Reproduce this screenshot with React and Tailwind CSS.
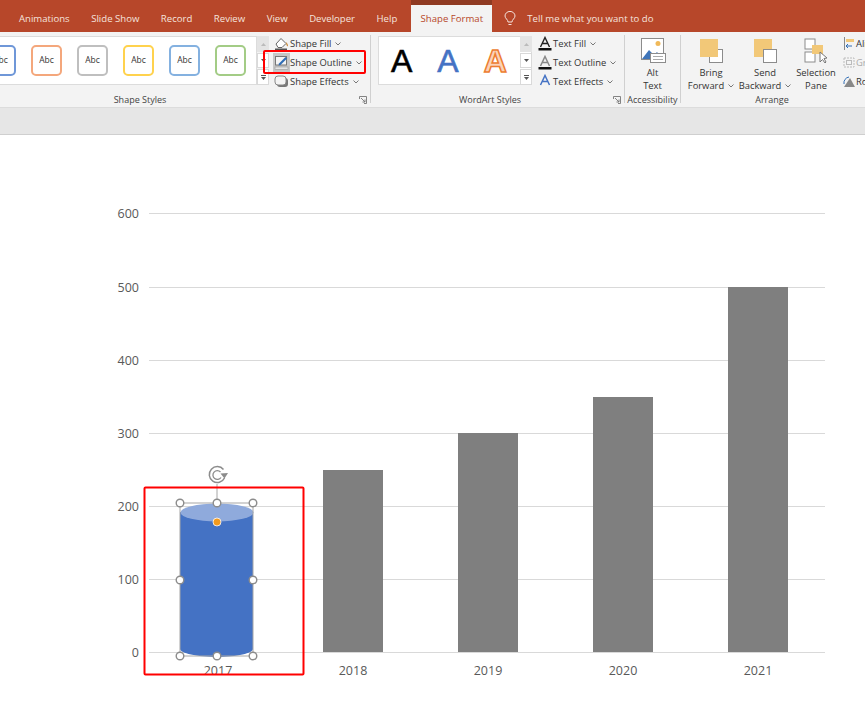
import React from "react";

const tabs = ["Animations", "Slide Show", "Record", "Review", "View", "Developer", "Help"];
const swatches = ["border-[#6f97d8]", "border-[#f4a77c]", "border-[#bfbfbf]", "border-[#ffd24d]", "border-[#84b1e0]", "border-[#a3cc86]"];

const Chevron = () => (
	<svg width="6" height="4" viewBox="0 0 6 4" className="ml-1 inline-block shrink-0">
		<path d="M0.5 0.5 L3 3 L5.5 0.5" fill="none" stroke="#6a6a6a" strokeWidth="0.9" />
	</svg>
);

const Launcher = () => (
	<svg width="8" height="8" viewBox="0 0 8 8" className="shrink-0">
		<path d="M0.5 3V0.5H7.5V7.5H5M2 2L6 6M6 3.5V6H3.5" fill="none" stroke="#777" strokeWidth="0.9" />
	</svg>
);

const Divider = () => <div className="mt-[3px] mb-[4px] w-px shrink-0 bg-[#d0d0d0]" />;

const ScrollBar = () => (
	<div className="flex w-[12px] flex-col gap-[1px] text-[#555]">
		<div className="flex h-[16px] items-center justify-center bg-[#e4e4e4]">
			<svg width="5" height="3" viewBox="0 0 5 3"><path d="M2.5 0L5 3H0Z" fill="#bbb" /></svg>
		</div>
		<div className="flex h-[15px] items-center justify-center border border-[#d9d9d9] bg-white">
			<svg width="5" height="3" viewBox="0 0 5 3"><path d="M2.5 3L5 0H0Z" fill="#555" /></svg>
		</div>
		<div className="flex h-[16px] flex-col items-center justify-center gap-[1px] border border-[#d9d9d9] bg-white">
			<div className="h-px w-[5px] bg-[#555]" />
			<svg width="5" height="3" viewBox="0 0 5 3"><path d="M2.5 3L5 0H0Z" fill="#555" /></svg>
		</div>
	</div>
);

const FillIcon = () => (
	<svg width="15" height="15" viewBox="0 0 15 15">
		<path d="M2 8L7 2.5L12 7.5L8 11.5H4Z" fill="#fff" stroke="#666" strokeWidth="1" />
		<path d="M12 6C14 8 14.5 10 13.5 10.5C12.5 10 12 8 12 6Z" fill="#c8893a" />
		<rect x="1" y="12.5" width="12" height="2.5" fill="#555" />
	</svg>
);

const OutlineIcon = () => (
	<svg width="15" height="15" viewBox="0 0 15 15">
		<rect x="1.5" y="1.5" width="11" height="8.5" fill="#f4f4f4" stroke="#777" strokeWidth="1" />
		<path d="M5 8.5L11.5 2L13 3.5L6.5 10L4.5 10.5Z" fill="#2f6db5" />
		<rect x="1" y="12" width="13" height="2.5" fill="#e4e4e4" stroke="#999" strokeWidth="0.6" />
	</svg>
);

const EffectsIcon = () => (
	<svg width="15" height="15" viewBox="0 0 15 15">
		<rect x="3" y="4" width="11" height="9" rx="3" fill="#777" />
		<rect x="1" y="2" width="11" height="9" rx="3" fill="#f4f4f4" stroke="#888" strokeWidth="1" />
	</svg>
);

const LetterIcon = ({ stroke, fill, bar }) => (
	<svg width="14" height="15" viewBox="0 0 14 15">
		<path d="M2.5 11L7 1.5L11.5 11M4.3 7.5H9.7" fill="none" stroke={stroke} strokeWidth={fill ? 1.4 : 1.5} />
		{bar && <rect x="0.5" y="12" width="13" height="2.5" fill="#111" />}
	</svg>
);

const CommandRow = ({ icon, label, active }) => (
	<div className="flex h-[19px] items-center whitespace-nowrap">
		<div className={`flex h-[19px] w-[17px] items-center justify-center ${active ? "bg-[#c6c6c6]" : ""}`}>{icon}</div>
		<span className="text-[9.4px] leading-none text-[#333]">{label}</span>
		<Chevron />
	</div>
);

const BigButton = ({ icon, top, bottom, chevron, width }) => (
	<div className={`flex flex-col items-center ${width}`}>
		<div className="flex h-[25px] shrink-0 items-center justify-center">{icon}</div>
		<span className="mt-[3px] text-[9.4px] leading-[13px] text-[#333]">{top}</span>
		<span className="flex items-center whitespace-nowrap text-[9.4px] leading-[13px] text-[#333]">
			{bottom}
			{chevron && <Chevron />}
		</span>
	</div>
);

const GroupLabel = ({ children, launcher }) => (
	<div className="relative flex h-[15px] items-center justify-center whitespace-nowrap text-[9px] leading-none text-[#444]">
		{children}
		{launcher && (
			<span className="absolute right-[3px] top-[4px]">
				<Launcher />
			</span>
		)}
	</div>
);

const Chart = () => {
	const rows = [
		[213, "600"],
		[287, "500"],
		[360, "400"],
		[433, "300"],
		[506, "200"],
		[579, "100"],
		[652, "0"],
	];
	const bars = [
		[323, 470, "2018", 353],
		[458, 433, "2019", 488],
		[593, 397, "2020", 623],
		[728, 287, "2021", 758],
	];
	const handles = [
		[180, 503],
		[217, 503],
		[253, 503],
		[180, 580],
		[253, 580],
		[180, 656],
		[217, 656],
		[253, 656],
	];
	return (
		<svg viewBox="0 135 865 576" className="block h-[576px] w-[865px] font-['Open_Sans',sans-serif]">
			{rows.map(([y, label]) => (
				<g key={label}>
					<line x1="149" x2="825" y1={y + 0.5} y2={y + 0.5} stroke="#d9d9d9" strokeWidth="1" />
					<text x="139" y={y + 4.5} textAnchor="end" fontSize="12.5" fill="#595959">
						{label}
					</text>
				</g>
			))}
			{bars.map(([x, y, label, cx]) => (
				<g key={label}>
					<rect x={x} y={y} width="60" height={652 - y} fill="#7f7f7f" />
					<text x={cx} y="675" textAnchor="middle" fontSize="12.5" fill="#595959">
						{label}
					</text>
				</g>
			))}
			<text x="218" y="675" textAnchor="middle" fontSize="12.5" fill="#595959">
				2017
			</text>

			<path d="M180 512V649C180 653 197 657 217 657C237 657 253 653 253 649V512Z" fill="#4472c4" />
			<ellipse cx="217" cy="512.5" rx="36.5" ry="9" fill="#8faadc" />
			<rect x="180" y="503" width="73" height="153" fill="none" stroke="#a6a6a6" strokeWidth="1" />
			<line x1="217" x2="217" y1="484" y2="503" stroke="#a6a6a6" strokeWidth="1" />
			<path d="M223.5 469.5A8 8 0 1 0 224.5 478" fill="none" stroke="#8c8c8c" strokeWidth="1.5" />
			<path d="M220.5 472A4.4 4.4 0 1 0 221 477.5" fill="none" stroke="#8c8c8c" strokeWidth="1.3" />
			<path d="M220.5 473.5L228 473L224.5 478.5Z" fill="#8c8c8c" />
			{handles.map(([x, y]) => (
				<circle key={`${x}-${y}`} cx={x} cy={y} r="3.8" fill="#fff" stroke="#8c8c8c" strokeWidth="1.4" />
			))}
			<circle cx="217" cy="522" r="4" fill="#f29a1f" stroke="#fff" strokeWidth="0.8" />

			<rect x="144.5" y="487.5" width="159" height="187" rx="1" fill="none" stroke="#ff0000" strokeWidth="2" />
		</svg>
	);
};

export default function App() {
	return (
		<div className="h-[711px] w-[865px] overflow-hidden bg-white font-['Open_Sans',sans-serif]">
			{/* title tabs */}
			<div className="flex h-[32px] bg-[#b7472a] text-[9.6px] leading-none text-[#f5e3dd]">
				<div className="flex items-center gap-[21.5px] pl-[19px] pt-[6px]">
					{tabs.map((tab) => (
						<span key={tab} className="whitespace-nowrap">
							{tab}
						</span>
					))}
				</div>
				<div className="ml-[14px] flex w-[81px] flex-col bg-[#f3f3f3]">
					<div className="h-[5px] bg-[#8f3a22]" />
					<div className="flex flex-1 items-center justify-center text-[#b7472a]">Shape Format</div>
				</div>
				<div className="ml-[12px] flex items-center gap-[11px] pt-[5px]">
					<svg width="12" height="16" viewBox="0 0 12 16">
						<path d="M4 11C4 8.5 1 7.5 1 5A5 4.6 0 0 1 11 5C11 7.5 8 8.5 8 11ZM4.5 13.5H7.5" fill="none" stroke="#f5e3dd" strokeWidth="1" />
					</svg>
					<span className="whitespace-nowrap">Tell me what you want to do</span>
				</div>
			</div>

			{/* ribbon */}
			<div className="flex h-[76px] border-b border-[#dcdcdc] bg-[#f3f3f3]">
				<div className="flex w-[370px] shrink-0 flex-col pt-[4px]">
					<div className="flex h-[57px]">
						<div className="flex h-[49px] w-[269px] shrink-0 overflow-hidden">
							<div className="flex w-[257px] items-center gap-[15px] overflow-hidden border border-l-0 border-[#dcdcdc] bg-white">
								{swatches.map((color, i) => (
									<div
										key={color}
										className={`flex h-[31px] w-[31px] shrink-0 items-center justify-center rounded-[5px] border-2 text-[8.5px] text-[#333] ${color} ${i === 0 ? "-ml-[15px]" : ""}`}
									>
										Abc
									</div>
								))}
							</div>
							<ScrollBar />
						</div>
						<div className="relative ml-[4px] -mt-[2px] flex flex-col">
							<CommandRow icon={<FillIcon />} label="Shape Fill" />
							<CommandRow icon={<OutlineIcon />} label="Shape Outline" active />
							<CommandRow icon={<EffectsIcon />} label="Shape Effects" />
							<div className="absolute left-[-10px] top-[16px] h-[24px] w-[103px] rounded-[2px] border-2 border-[#ff0000]" />
						</div>
					</div>
					<GroupLabel launcher>
						<span className="pr-[90px]">Shape Styles</span>
					</GroupLabel>
				</div>
				<Divider />

				<div className="flex w-[253px] shrink-0 flex-col pt-[4px]">
					<div className="flex h-[57px] pl-[7px]">
						<div className="flex h-[49px] w-[154px] items-center gap-[25px] border border-[#dcdcdc] bg-white pl-[12px] font-['Liberation_Sans',sans-serif] text-[32px] leading-none">
							<span className="text-black [-webkit-text-stroke:0.6px_#000]">A</span>
							<span className="text-[#4472c4] [-webkit-text-stroke:0.6px_#4472c4]">A</span>
							<span className="font-bold text-[#fbd3b8] [-webkit-text-stroke:1.5px_#ed7d31]">A</span>
						</div>
						<div className="-ml-[12px]">
							<ScrollBar />
						</div>
						<div className="ml-[4px] -mt-[2px] flex flex-col">
							<CommandRow icon={<LetterIcon stroke="#222" bar fill />} label="Text Fill" />
							<CommandRow icon={<LetterIcon stroke="#888" bar />} label="Text Outline" />
							<CommandRow icon={<LetterIcon stroke="#4472c4" />} label="Text Effects" />
						</div>
					</div>
					<GroupLabel launcher>
						<span className="pr-[15px]">WordArt Styles</span>
					</GroupLabel>
				</div>
				<Divider />

				<div className="flex w-[55px] shrink-0 flex-col pt-[6px]">
					<div className="h-[55px]">
						<BigButton
							width="w-full"
							top="Alt"
							bottom="Text"
							icon={
								<svg width="26" height="25" viewBox="0 0 26 25">
									<rect x="1.5" y="0.5" width="22" height="21" fill="#fff" stroke="#8c8c8c" />
									<circle cx="18" cy="5.5" r="2.5" fill="#f0b95a" />
									<path d="M2 21L9 12L14 17L17 14L21 19V21Z" fill="#3f75b9" />
									<rect x="10.5" y="15.5" width="15" height="9" fill="#fff" stroke="#8c8c8c" />
									<path d="M13 18.5H23M13 21.5H23" stroke="#aaa" />
								</svg>
							}
						/>
					</div>
					<GroupLabel>Accessibility</GroupLabel>
				</div>
				<Divider />

				<div className="flex min-w-0 flex-1 flex-col overflow-hidden pt-[6px]">
					<div className="flex h-[55px] pl-[4px]">
						<BigButton
							width="w-[52px] shrink-0"
							top="Bring"
							bottom="Forward"
							chevron
							icon={
								<svg width="23" height="24" viewBox="0 0 23 24">
									<rect x="9.5" y="10.5" width="13" height="13" fill="#fff" stroke="#8c8c8c" />
									<rect x="0" y="0" width="18" height="18" fill="#f2c878" />
								</svg>
							}
						/>
						<BigButton
							width="w-[56px] shrink-0"
							top="Send"
							bottom="Backward"
							chevron
							icon={
								<svg width="23" height="24" viewBox="0 0 23 24">
									<rect x="0" y="0" width="18" height="18" fill="#f2c878" />
									<rect x="9.5" y="10.5" width="13" height="13" fill="#fff" stroke="#8c8c8c" />
								</svg>
							}
						/>
						<BigButton
							width="w-[46px] shrink-0"
							top="Selection"
							bottom="Pane"
							icon={
								<svg width="24" height="25" viewBox="0 0 24 25">
									<rect x="1" y="1" width="10" height="10" fill="#fff" stroke="#8c8c8c" />
									<rect x="1" y="14" width="10" height="10" fill="#fff" stroke="#8c8c8c" />
									<rect x="8" y="7" width="11" height="9" fill="#f2c878" />
									<path d="M16 14L16 24L18.5 21.5L21 25L22 24L20 20.5L23 20Z" fill="#fff" stroke="#777" />
								</svg>
							}
						/>
						<div className="ml-[4px] -mt-[4px] flex flex-col text-[9.4px] leading-[19px] text-[#333]">
							<div className="flex h-[19px] items-center gap-[1px]">
								<svg width="12" height="13" viewBox="0 0 12 13">
									<path d="M1.5 0V13" stroke="#888" />
									<rect x="3" y="2" width="8" height="3" fill="#f2c878" />
									<path d="M9 9H3M5 7L3 9L5 11" fill="none" stroke="#2f6db5" />
								</svg>
								<span>Align</span>
							</div>
							<div className="flex h-[19px] items-center gap-[1px] text-[#aaa]">
								<svg width="12" height="13" viewBox="0 0 12 13">
									<rect x="1" y="2" width="10" height="9" fill="none" stroke="#bbb" strokeDasharray="2 1" />
									<rect x="3.5" y="4.5" width="5" height="4" fill="none" stroke="#bbb" />
								</svg>
								<span>Group</span>
							</div>
							<div className="flex h-[19px] items-center gap-[1px]">
								<svg width="12" height="13" viewBox="0 0 12 13">
									<path d="M7 3L12 12H1Z" fill="#888" />
									<path d="M1 9A6 6 0 0 1 6 2" fill="none" stroke="#2f6db5" />
								</svg>
								<span>Rotate</span>
							</div>
						</div>
					</div>
					<GroupLabel>
						<span className="pr-[2px]">Arrange</span>
					</GroupLabel>
				</div>
			</div>

			<div className="h-[27px] border-b border-[#cfcfcf] bg-[#e6e6e6]" />
			<Chart />
		</div>
	);
}
